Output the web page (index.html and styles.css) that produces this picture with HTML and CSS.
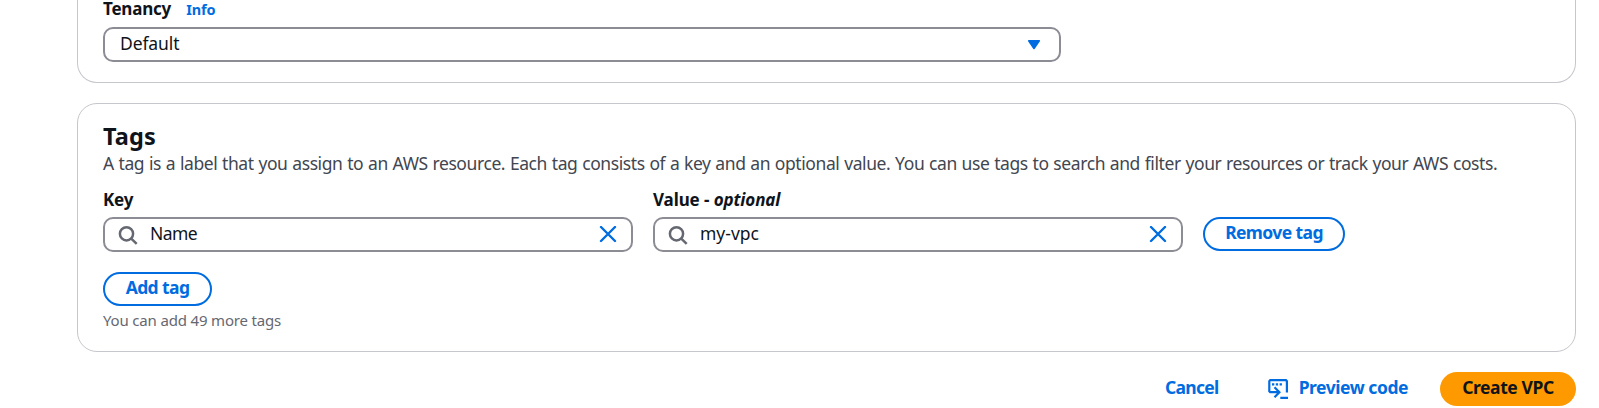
FILE: index.html
```html
<!DOCTYPE html>
<html lang="en">
<head>
<meta charset="utf-8">
<title>Create VPC</title>
<link rel="stylesheet" href="styles.css">
</head>
<body>
<main class="page">
  <section class="card card-settings">
    <div class="label-row"><span class="label tenancy">Tenancy</span><a class="info">Info</a></div>
    <div class="field select">
      <span class="value default">Default</span>
      <svg class="caret" width="14" height="12" viewBox="0 0 14 12"><path d="M1.7 1.8h10.6L7 9.5z" fill="#006ce0" stroke="#006ce0" stroke-width="1.6" stroke-linejoin="round"/></svg>
    </div>
  </section>

  <section class="card card-tags">
    <h2 class="title"><span>Tags</span></h2>
    <p class="description"><span>A tag is a label that you assign to an AWS resource. Each tag consists of a key and an optional value. You can use tags to search and filter your resources or track your AWS costs.</span></p>
    <div class="tag-row">
      <div class="tag-field">
        <div class="label-row"><span class="label key">Key</span></div>
        <div class="field">
          <svg class="search" width="20" height="20" viewBox="0 0 20 20"><circle cx="8.5" cy="8.8" r="6.6"/><path d="M13 13.3l5.7 5.5"/></svg>
          <span class="value name">Name</span>
          <svg class="clear" width="18" height="18" viewBox="0 0 18 18"><path d="M2 1l14 14M16 1L2 15"/></svg>
        </div>
      </div>
      <div class="tag-field">
        <div class="label-row"><span class="label value-label">Value - <em>optional</em></span></div>
        <div class="field">
          <svg class="search" width="20" height="20" viewBox="0 0 20 20"><circle cx="8.5" cy="8.8" r="6.6"/><path d="M13 13.3l5.7 5.5"/></svg>
          <span class="value vpc">my-vpc</span>
          <svg class="clear" width="18" height="18" viewBox="0 0 18 18"><path d="M2 1l14 14M16 1L2 15"/></svg>
        </div>
      </div>
      <button class="button remove"><span>Remove tag</span></button>
    </div>
    <button class="button add"><span>Add tag</span></button>
    <p class="hint"><span>You can add 49 more tags</span></p>
  </section>

  <footer class="actions">
    <button class="button link cancel"><span>Cancel</span></button>
    <button class="button link preview">
      <svg width="20" height="20" viewBox="0 0 20 20"><path d="M10.8 13.2H2.2L1.3 12.3V2.1L2.2 1.2H18L18.9 2.1V13.5M6.5 8.2l4.9 5-4.9 5M12.3 18.9H20" fill="none" stroke="#006ce0" stroke-width="2.2"/><path d="M4 4.2h2.3v2.3H4zM7.8 4.2h2.3v2.3H7.8zM11.6 4.2h2.3v2.3h-2.3z" fill="#006ce0"/></svg>
      <span>Preview code</span>
    </button>
    <button class="button primary"><span>Create VPC</span></button>
  </footer>
</main>
</body>
</html>
```
FILE: styles.css
```css
* { box-sizing: border-box; }
body {
  margin: 0;
  height: 408px;
  overflow: hidden;
  background: #fff;
  color: #0f141a;
  font-family: "Noto Sans", "Open Sans", sans-serif;
  font-size: 17.5px;
  line-height: 25px;
}
h2, p { margin: 0; }
.page {
  display: flex;
  flex-direction: column;
  width: 1499px;
  margin-left: 77px;
}
.card {
  border: 1px solid #c6c6cd;
  border-radius: 20px;
  padding-left: 25px;
}
.card-settings {
  height: 83px;
  border-top: 0;
  border-top-left-radius: 0;
  border-top-right-radius: 0;
}
.card-settings .label-row { height: 27px; padding-bottom: 9px; }
.card-tags { height: 249px; margin-top: 20px; padding-top: 20px; }
.label-row { display: flex; align-items: center; gap: 15px; white-space: nowrap; }
.label { font-weight: 700; font-size: 17px; letter-spacing: -.2px; padding-bottom: 1px; }
.value-label { letter-spacing: -.1px; }
.info { color: #006ce0; font-weight: 700; font-size: 14.5px; letter-spacing: -.1px; }
.field {
  display: flex;
  align-items: center;
  height: 35px;
  border: 2px solid #8c8c94;
  border-radius: 10px;
  padding: 0 14px 0 13px;
}
.select { width: 958px; padding: 0 18px 0 15px; justify-content: space-between; }
.value { padding-bottom: 2px; letter-spacing: -.1px; }
.name { letter-spacing: -.6px; }
.vpc { letter-spacing: 0; }
.search { margin: 0 12px 0 0; fill: none; stroke: #656871; stroke-width: 2.5; }
.clear { margin-left: auto; fill: none; stroke: #006ce0; stroke-width: 2.4; stroke-linecap: round; }
.title { font-size: 23.5px; line-height: 25px; letter-spacing: .1px; }
.description { color: #424650; white-space: nowrap; line-height: 29px; letter-spacing: -.41px; word-spacing: .6px; }
.tag-row { display: flex; align-items: flex-end; gap: 20px; height: 74px; }
.tag-field { width: 530px; }
.tag-field .label-row { height: 29px; padding-bottom: 6px; }
.button {
  display: inline-flex;
  align-items: center;
  justify-content: center;
  height: 34px;
  padding: 0 0 3px;
  border: 2px solid #006ce0;
  border-radius: 17px;
  background: #fff;
  color: #006ce0;
  font: 700 17.5px/25px "Noto Sans", "Open Sans", sans-serif;
  letter-spacing: -.6px;
  white-space: nowrap;
}
.remove { width: 142px; margin-bottom: 1px; }
.add { display: flex; width: 109px; margin-top: 20px; }
.hint { color: #656871; font-size: 15px; line-height: 20px; margin-top: 4px; letter-spacing: -.17px; }
.actions { display: flex; height: 34px; margin-top: 20px; justify-content: flex-end; }
.link { border: 0; }
.cancel { margin-right: 49px; letter-spacing: -.7px; }
.preview { gap: 11px; margin-right: 32px; letter-spacing: -.45px; }
.preview svg { margin-top: 3px; }
.primary { width: 136px; border: 0; background: #ff9900; color: #0f141a; letter-spacing: -.4px; }
```
